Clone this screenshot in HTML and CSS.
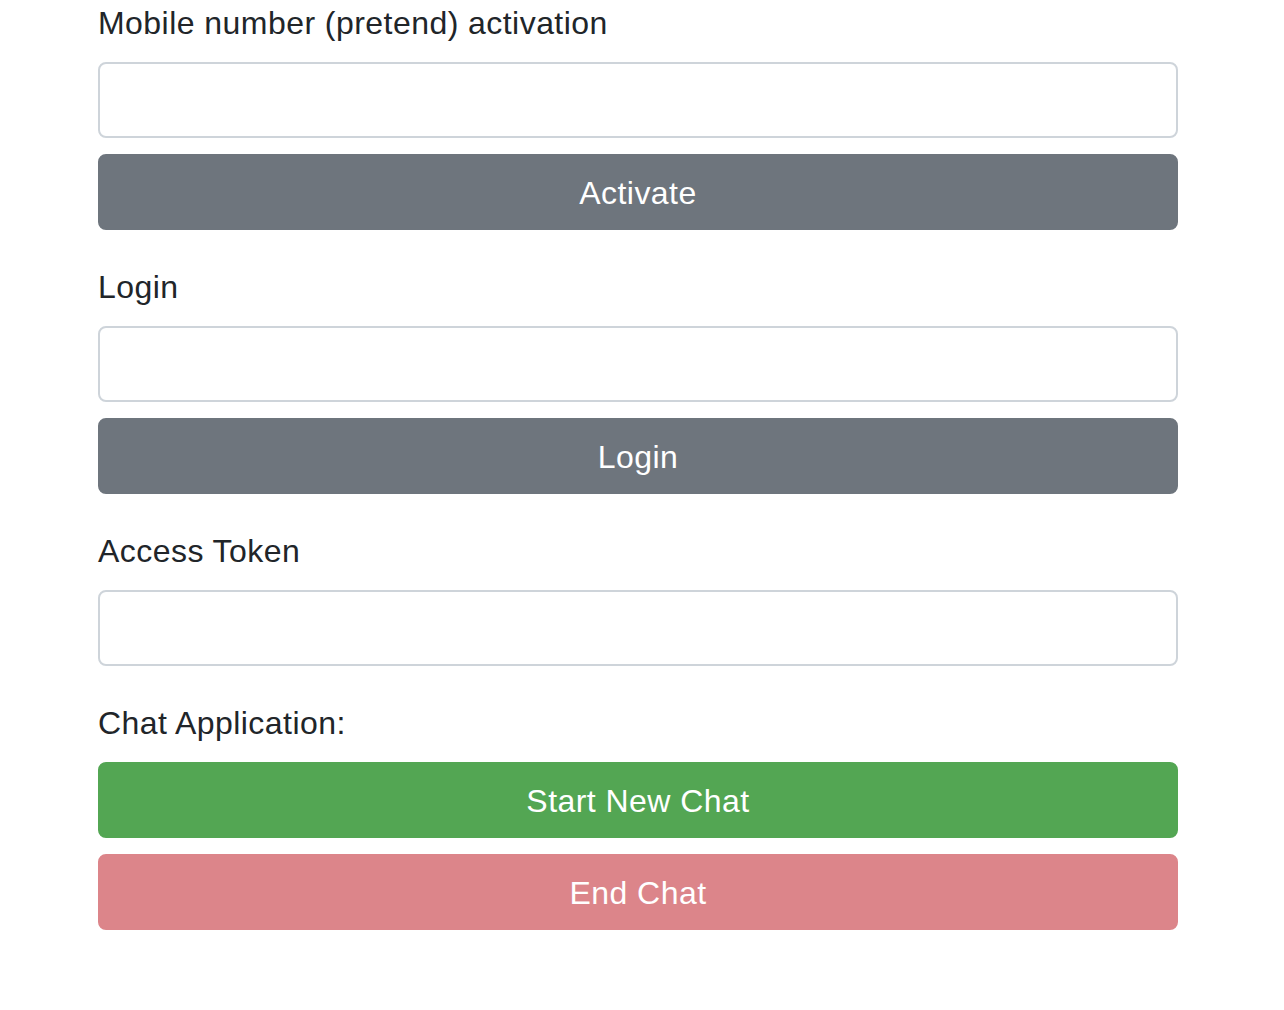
FILE: index.html
```html
<!DOCTYPE html>
<html lang="en">
<head>
<meta charset="utf-8">
<title>Chat</title>
<link rel="stylesheet" href="styles.css">
</head>
<body>
<div class="container">
  <div class="group">
    <label class="label" for="mobile">Mobile number (pretend) activation</label>
    <input class="input" id="mobile" type="text">
    <button class="btn btn-gray">Activate</button>
  </div>
  <div class="group">
    <label class="label" for="login">Login</label>
    <input class="input" id="login" type="text">
    <button class="btn btn-gray">Login</button>
  </div>
  <div class="group">
    <label class="label" for="token">Access Token</label>
    <input class="input" id="token" type="text">
  </div>
  <div class="group">
    <label class="label">Chat Application:</label>
    <button class="btn btn-green">Start New Chat</button>
    <button class="btn btn-red">End Chat</button>
  </div>
</div>
</body>
</html>
```
FILE: styles.css
```css
* { box-sizing: border-box; }
html, body {
  margin: 0;
  padding: 0;
  background: #fff;
}
body {
  font-family: "Liberation Sans", Arial, sans-serif;
  font-size: 32px;
  letter-spacing: 0.45px;
  color: #212529;
}
.container {
  width: 1080px;
  margin-left: 98px;
  display: flex;
  flex-direction: column;
  gap: 34px;
}
.group {
  display: flex;
  flex-direction: column;
  gap: 16px;
}
.label {
  display: block;
  height: 46px;
  line-height: 46px;
  font-size: 32px;
}
.input {
  display: block;
  width: 100%;
  height: 76px;
  border: 2px solid #ced4da;
  border-radius: 8px;
  background: #fff;
  font-size: 32px;
  font-family: inherit;
  padding: 0 24px;
  outline: none;
}
.btn {
  display: block;
  width: 100%;
  height: 76px;
  border: 2px solid transparent;
  border-radius: 8px;
  color: #fff;
  font-family: inherit;
  font-size: 32px;
  letter-spacing: 0.45px;
  line-height: 74px;
  padding: 0;
  text-align: center;
}
.btn-gray { background: #6e757d; border-color: #6e757d; }
.btn-green { background: #53a653; border-color: #53a653; }
.btn-red { background: #dc858a; border-color: #dc858a; }
```
